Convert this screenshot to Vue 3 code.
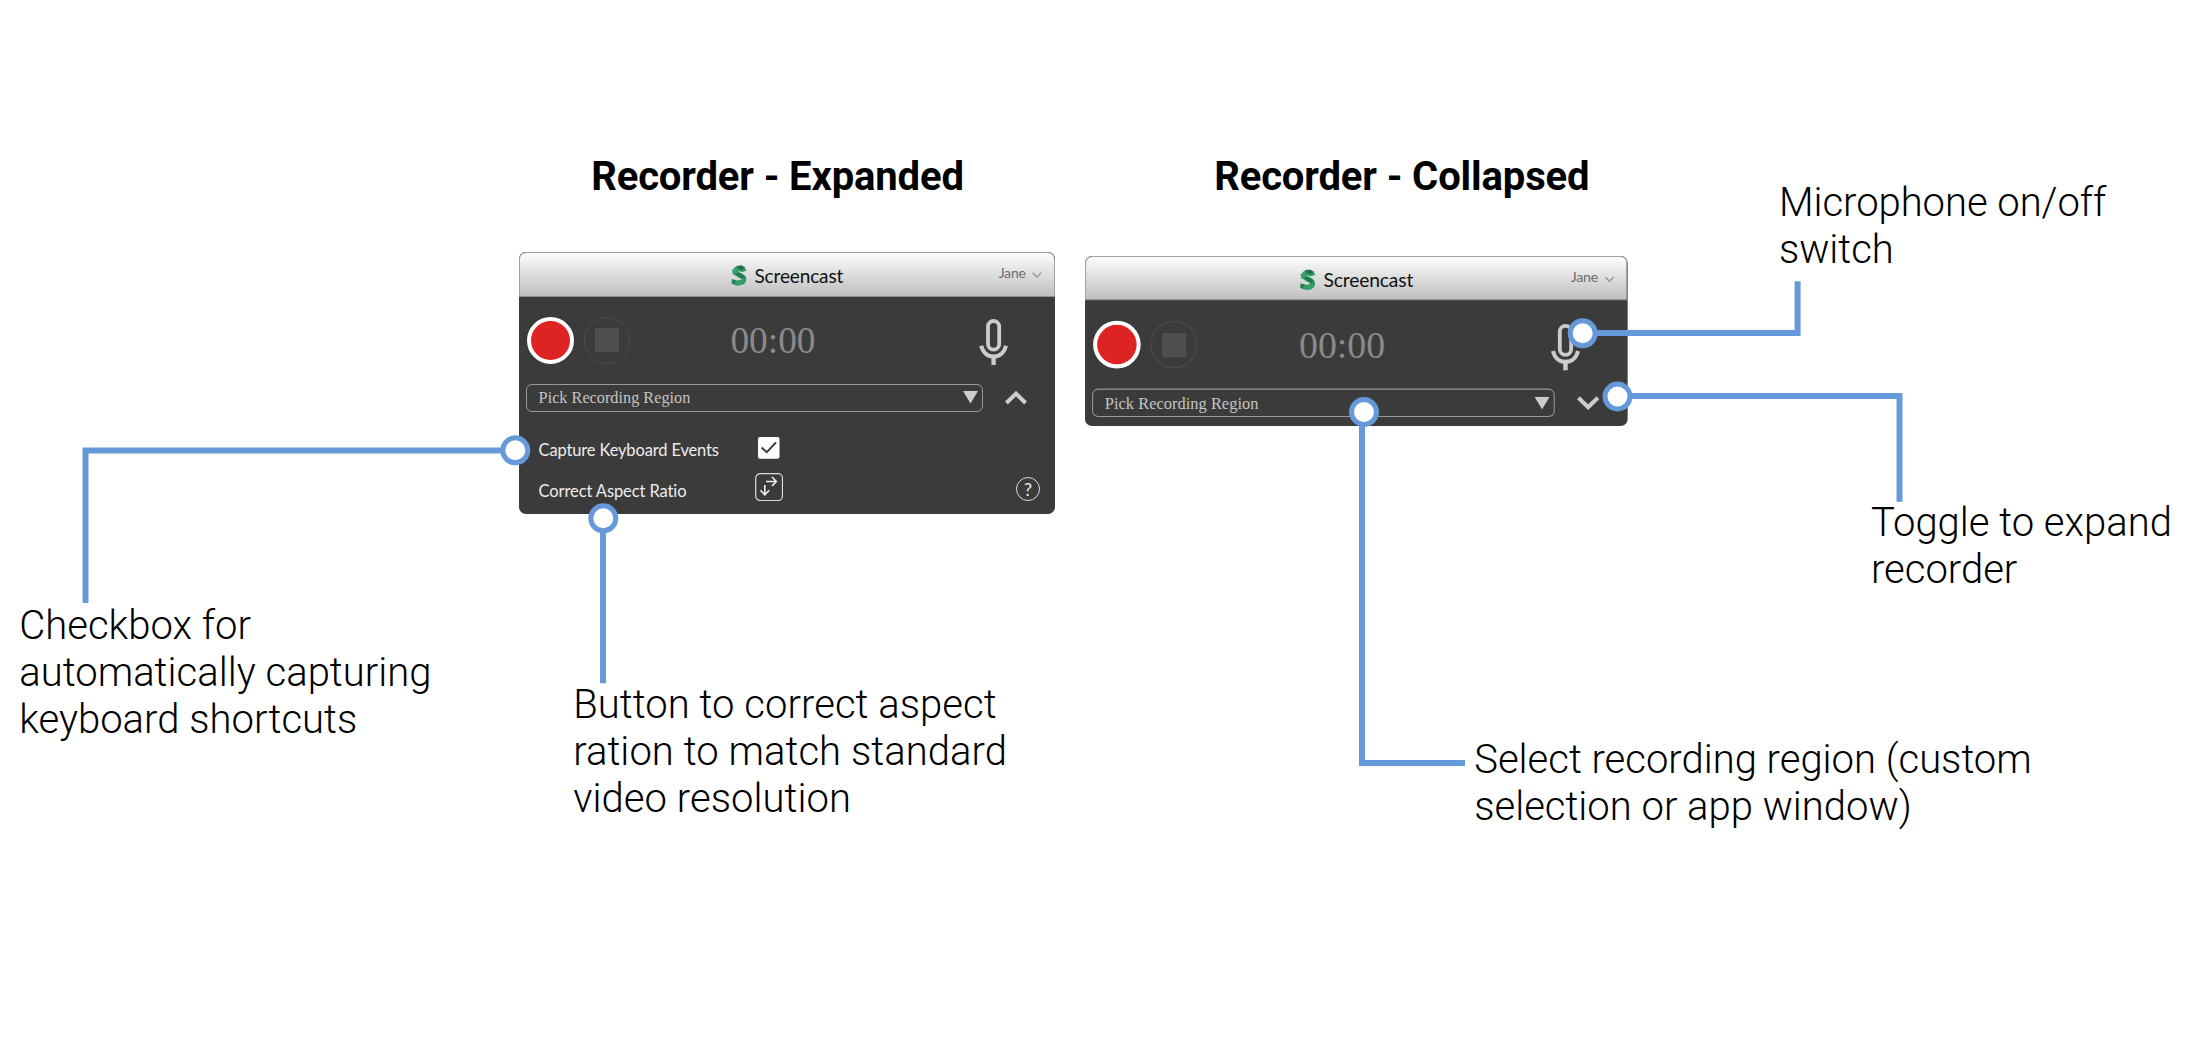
<script setup>
const panels = [
  { id: 'expanded', expanded: true },
  { id: 'collapsed', expanded: false },
]

const notes = [
  { id: 'mic', lines: ['Microphone on/off', 'switch'] },
  { id: 'toggle', lines: ['Toggle to expand', 'recorder'] },
  { id: 'checkbox', lines: ['Checkbox for', 'automatically capturing', 'keyboard shortcuts'] },
  { id: 'aspect', lines: ['Button to correct aspect', 'ration to match standard', 'video resolution'] },
  { id: 'region', lines: ['Select recording region (custom', 'selection or app window)'] },
]

const connectors = [
  { path: 'M515.3 450.5H85.5V603', x: 515.3, y: 450.3 },
  { path: 'M603 518V683.3', x: 603.3, y: 518.3 },
  { path: 'M1362 412V763H1465', x: 1364, y: 412 },
  { path: 'M1582.7 333H1797.6V281.3', x: 1582.7, y: 333.3 },
  { path: 'M1617.5 396H1899.5V501.7', x: 1617.5, y: 396.5 },
]
</script>

<template>
  <main class="board">
    <h2 class="heading heading-expanded">Recorder - Expanded</h2>
    <h2 class="heading heading-collapsed">Recorder - Collapsed</h2>

    <section v-for="p in panels" :key="p.id" class="panel" :class="p.id">
      <header class="bar">
        <div class="brand">
          <svg class="logo" viewBox="0 0 16 21">
            <path d="M13.2 6.4C12.2 3.6 5 2.6 4.2 6.2C3.6 10.4 13 9.3 12.8 14.4C12.4 18.6 4.6 18.8 2 16.2" fill="none" stroke="#2f9a60" stroke-width="5" />
            <path d="M5 .9L10.5 .3L14.5 2.8L9.5 5.2Z" fill="#246f47" />
            <path d="M.9 5L5.5 3L6 8.5L2 10Z" fill="#3aa56b" />
            <path d="M4 8.5L8 7.5L14.5 12L10.5 13.5Z" fill="#24794b" />
            <path d="M.8 14L5 15.5L3 19.5L.8 18Z" fill="#2a8152" />
            <path d="M6 16.2L13 14.8L10 20L5 20.6Z" fill="#35a169" />
          </svg>
          <span class="title">Screencast</span>
        </div>
        <div class="user">
          <span>Jane</span>
          <svg class="user-arrow" viewBox="0 0 10 6"><path d="M.8 .8L5 5L9.2 .8" fill="none" stroke="#999" stroke-width="1.3" /></svg>
        </div>
      </header>

      <div class="controls">
        <span class="record"></span>
        <span class="stop"><i></i></span>
        <span class="timer">00:00</span>
        <svg class="mic" viewBox="0 0 30 46">
          <rect x="9" y="2" width="11.2" height="28.6" rx="5.6" fill="none" stroke="#ccc" stroke-width="3.8" />
          <path d="M2.2 26.8C4 34 9 37.6 14.6 37.6S25.2 34 27 26.8" fill="none" stroke="#ccc" stroke-width="4" />
          <path d="M14.6 37V46" stroke="#ccc" stroke-width="4.4" />
        </svg>
      </div>

      <div class="region-row">
        <div class="select">
          <span class="placeholder">Pick Recording Region</span>
          <svg class="caret" viewBox="0 0 15 12.4"><path d="M0 0H15L7.5 12.4Z" fill="#ccc" /></svg>
        </div>
        <svg class="chevron" viewBox="0 0 22 14">
          <path :d="p.expanded ? 'M1.4 12L11 2.6L20.6 12' : 'M1.4 2L11 11.4L20.6 2'" fill="none" stroke="#ccc" stroke-width="4" />
        </svg>
      </div>

      <div v-if="p.expanded" class="options">
        <div class="option">
          <span class="label">Capture Keyboard Events</span>
          <svg class="check" viewBox="0 0 22 22">
            <rect width="21.5" height="21.7" rx="2" fill="#fff" />
            <path d="M3.6 10.4L8.8 15.2L18 5.4" fill="none" stroke="#3b3b3b" stroke-width="2" />
          </svg>
        </div>
        <div class="option">
          <span class="label second">Correct Aspect Ratio</span>
          <svg class="aspect-button" viewBox="0 0 28 28">
            <rect x=".7" y=".7" width="26.8" height="26.8" rx="4.5" fill="none" stroke="#ddd" stroke-width="1.2" />
            <path d="M11 8.5H21M17 4L21.3 8.5L17 13M9.8 12V21.6M5.4 17.2L9.8 21.8L14.2 17.2" fill="none" stroke="#eee" stroke-width="1.6" />
          </svg>
          <span class="help">?</span>
        </div>
      </div>
    </section>

    <svg class="connectors" viewBox="0 0 2199 1037">
      <g v-for="c in connectors" :key="c.path" stroke="#6699da">
        <path :d="c.path" fill="none" stroke-width="6" />
        <circle :cx="c.x" :cy="c.y" r="12.5" fill="#fff" stroke-width="5" />
      </g>
    </svg>

    <p v-for="n in notes" :key="n.id" class="note" :class="'note-' + n.id">
      <span v-for="line in n.lines" :key="line">{{ line }}</span>
    </p>
  </main>
</template>

<style>
body {
  margin: 0;
  background: #fff;
}
</style>

<style scoped>
.board {
  position: relative;
  width: 2199px;
  height: 1037px;
  overflow: hidden;
  background: #fff;
  color: #000;
  font-family: Roboto, "Liberation Sans", sans-serif;
}
.heading {
  position: absolute;
  top: 153px;
  margin: 0;
  font-size: 40px;
  line-height: 47px;
  font-weight: 700;
  letter-spacing: -0.13px;
  white-space: nowrap;
}
.heading-expanded { left: 591.2px; }
.heading-collapsed { left: 1214.2px; }

.panel {
  position: absolute;
  box-sizing: border-box;
  width: 535.7px;
  border-radius: 7px;
  background: #3b3b3b;
  overflow: hidden;
  transform-origin: 0 0;
  font-family: Lato, "Liberation Sans", sans-serif;
}
.expanded {
  left: 519px;
  top: 252.3px;
  height: 261.4px;
}
.collapsed {
  left: 1084.8px;
  top: 256.2px;
  height: 168.4px;
  transform: scale(1.0124);
}
.bar {
  position: relative;
  box-sizing: border-box;
  display: flex;
  justify-content: center;
  height: 44.4px;
  border: 1px solid #a2a2a2;
  border-bottom-color: #8c8c8c;
  border-radius: 7px 7px 0 0;
  background: linear-gradient(#fcfcfc, #bfbfbf);
}
.brand {
  display: flex;
  align-items: flex-start;
  gap: 8px;
  padding-top: 11.5px;
}
.logo {
  width: 16px;
  height: 21px;
}
.title {
  margin-top: -1px;
  font-size: 19px;
  line-height: 24px;
  letter-spacing: -0.14px;
  color: #111;
}
.user {
  position: absolute;
  right: 12px;
  top: 11px;
  display: flex;
  align-items: center;
  gap: 6px;
  font-size: 14px;
  line-height: 18px;
  letter-spacing: -0.2px;
  color: #6c6c6c;
}
.user-arrow {
  width: 10px;
  height: 6px;
  margin-top: 4px;
}
.controls {
  display: flex;
  align-items: center;
  height: 87px;
  padding-left: 7.5px;
}
.record {
  box-sizing: border-box;
  width: 47.2px;
  height: 47.2px;
  border: 4.8px solid #fff;
  border-radius: 50%;
  background: #dd2423;
}
.stop {
  display: flex;
  align-items: center;
  justify-content: center;
  box-sizing: border-box;
  width: 46.8px;
  height: 46.8px;
  margin-left: 10px;
  border: 1px solid #4c4c4c;
  border-radius: 50%;
}
.stop i {
  width: 23.6px;
  height: 23.6px;
  background: #4f4f4f;
}
.timer {
  width: 86px;
  margin: 2px 0 0 99.9px;
  font-family: "Liberation Serif", serif;
  font-size: 37.4px;
  line-height: 44px;
  color: #8a8a8a;
}
.mic {
  width: 30px;
  height: 46px;
  margin: 4px 0 0 163px;
}
.region-row {
  display: flex;
  align-items: center;
  gap: 22.4px;
  padding-left: 7px;
}
.select {
  box-sizing: border-box;
  display: flex;
  align-items: center;
  justify-content: space-between;
  width: 456.7px;
  height: 28px;
  padding: 0 4px 0 11.6px;
  border: 1px solid #999;
  border-radius: 6px;
  font-family: "Liberation Serif", serif;
  font-size: 16.2px;
  line-height: 20px;
  color: #c4c4c4;
}
.placeholder {
  padding-top: 1px;
  letter-spacing: 0.03px;
}
.caret {
  width: 15px;
  height: 12.4px;
}
.chevron {
  width: 22px;
  height: 14px;
}
.options {
  display: flex;
  flex-direction: column;
  padding: 25px 0 0 19.6px;
}
.option {
  display: flex;
  align-items: flex-start;
  height: 36.3px;
}
.label {
  width: 219.2px;
  padding-top: 3px;
  font-size: 16.5px;
  line-height: 20px;
  letter-spacing: -0.15px;
  color: #ededed;
}
.second {
  width: 216px;
  padding-top: 8.5px;
  letter-spacing: -0.1px;
}
.check {
  width: 22px;
  height: 22px;
}
.aspect-button {
  width: 28px;
  height: 28px;
}
.help {
  box-sizing: border-box;
  width: 24px;
  height: 24px;
  margin: 4.4px 0 0 233.4px;
  border: 1.3px solid #ddd;
  border-radius: 50%;
  font-size: 18px;
  line-height: 22px;
  text-align: center;
  color: #eee;
}
.connectors {
  position: absolute;
  inset: 0;
  width: 2199px;
  height: 1037px;
}
.note {
  position: absolute;
  display: flex;
  flex-direction: column;
  margin: 0;
  font-size: 40px;
  line-height: 47px;
  font-weight: 300;
  white-space: nowrap;
}
.note-mic { left: 1779px; top: 178.7px; letter-spacing: -0.04px; }
.note-toggle { left: 1871px; top: 498.7px; }
.note-checkbox { left: 19.2px; top: 602px; letter-spacing: 0.03px; }
.note-aspect { left: 573.2px; top: 681px; letter-spacing: 0.05px; }
.note-region { left: 1474.2px; top: 736px; }
</style>
